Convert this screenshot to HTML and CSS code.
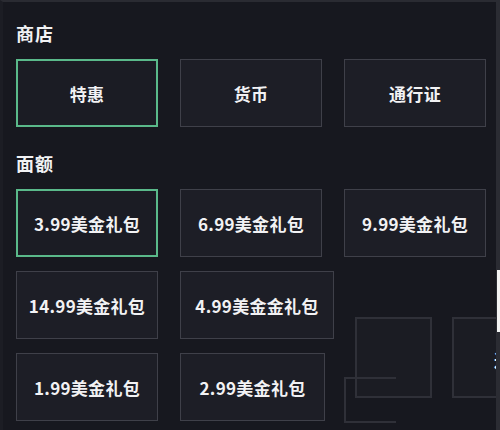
FILE: index.html
```html
<!DOCTYPE html>
<html lang="zh-CN">
<head>
  <meta charset="UTF-8">
  <meta name="viewport" content="width=device-width, initial-scale=1.0">
  <title>商店</title>
  <link rel="stylesheet" href="styles.css">
</head>
<body>
  <div class="panel">
    <h2 class="section-title">商店</h2>
    <div class="option-grid">
      <button class="option active">特惠</button>
      <button class="option">货币</button>
      <button class="option">通行证</button>
    </div>

    <h2 class="section-title">面额</h2>
    <div class="option-grid">
      <button class="option active">3.99美金礼包</button>
      <button class="option">6.99美金礼包</button>
      <button class="option">9.99美金礼包</button>
      <button class="option">14.99美金礼包</button>
      <button class="option option-wide">4.99美金金礼包</button>
      <span></span>
      <button class="option">1.99美金礼包</button>
      <button class="option option-mid">2.99美金礼包</button>
      <span></span>
    </div>

    <!-- 残影框 -->
    <div class="ghost ghost-a"></div>
    <div class="ghost ghost-b"><span class="ghost-text">过</span></div>
    <div class="ghost ghost-c"></div>
    <div class="edge"></div>
    <div class="edge-light"></div>
  </div>
</body>
</html>
```

FILE: styles.css
```css
* {
  margin: 0;
  padding: 0;
  box-sizing: border-box;
}

body {
  width: 500px;
  height: 430px;
  overflow: hidden;
  background: #17181f;
  font-family: "Noto Sans CJK SC", "Noto Sans", sans-serif;
  color: #f2f2f4;
}

.panel {
  position: relative;
  height: 430px;
  padding: 19px 0 0 13px;
  border-top: 2px solid #2a2b32;
  border-left: 3px solid #1c1d24;
}

.section-title {
  font-size: 18px;
  font-weight: 700;
  line-height: 24px;
  margin-bottom: 14px;
  letter-spacing: 1px;
}

.option-grid {
  display: grid;
  grid-template-columns: 142px 142px 142px;
  grid-auto-rows: 68px;
  column-gap: 22px;
  row-gap: 14px;
  margin-bottom: 24px;
}

.option {
  background: #1d1e26;
  border: 1px solid #3f4049;
  color: #f2f2f4;
  font-family: inherit;
  font-size: 17px;
  font-weight: 700;
  letter-spacing: 0.3px;
  cursor: pointer;
}

.option.active {
  border: 2px solid #5ab98a;
  background: #1b1c24;
}

.option-wide {
  width: 154px;
}

.option-mid {
  width: 145px;
}

.ghost {
  position: absolute;
  border: 2px solid #2f3038;
  background: #1b1c23;
}

.ghost-a {
  left: 352px;
  top: 315px;
  width: 77px;
  height: 81px;
}

.ghost-b {
  left: 449px;
  top: 315px;
  width: 70px;
  height: 81px;
}

.ghost-text {
  position: absolute;
  left: 40px;
  top: 28px;
  font-size: 17px;
  font-weight: 700;
  color: #f2f2f4;
}

.ghost-c {
  left: 341px;
  top: 375px;
  width: 52px;
  height: 46px;
  border-right: none;
  background: transparent;
}

.edge {
  position: absolute;
  right: 0;
  top: -2px;
  width: 4px;
  height: 430px;
  background: #2b2c33;
}

.edge-light {
  position: absolute;
  right: 0;
  top: 268px;
  width: 3px;
  height: 62px;
  background: #f4f4f4;
}
```
